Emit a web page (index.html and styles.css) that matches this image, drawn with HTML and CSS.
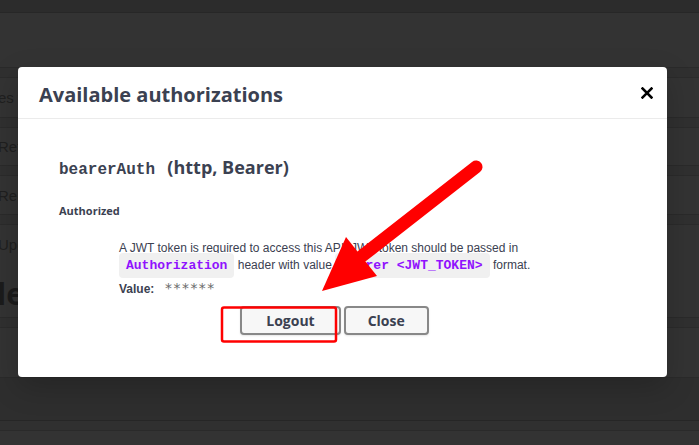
FILE: index.html
```html
<!DOCTYPE html>
<html>
<head>
<meta charset="utf-8">
<link rel="stylesheet" href="styles.css">
</head>
<body>
<div class="page">
  <div class="topbar"></div>
  <div class="hero"></div>
  <div class="gap"></div>
  <div class="row h40"><span class="rtext">es the</span></div>
  <div class="gap"></div>
  <div class="row h38"><span class="rtext">Ret</span></div>
  <div class="gap"></div>
  <div class="row h39"><span class="rtext">Ren</span></div>
  <div class="gap"></div>
  <div class="row h40"><span class="rtext">Upd</span></div>
  <div class="heading"><span class="htext">le</span></div>
  <div class="gap"></div>
  <div class="row h50"></div>
  <div class="spacer"></div>
  <div class="band"></div>
  <div class="rest"></div>
</div>

<div class="modal">
  <div class="modal-header">
    <h3 class="modal-title">Available authorizations</h3>
    <button class="close-x" aria-label="close">
      <svg width="12" height="12" viewBox="0 0 12 12"><path d="M1.5 1.5 L10.5 10.5 M10.5 1.5 L1.5 10.5" stroke="#000" stroke-width="2.5" stroke-linecap="square"/></svg>
    </button>
  </div>
  <div class="modal-body">
    <h4 class="scheme"><code class="scheme-code">bearerAuth</code>&nbsp; (http, Bearer)</h4>
    <div class="authorized">Authorized</div>
    <div class="desc">
      <p class="desc-text">A JWT token is required to access this API. JWT token should be passed in <code class="md-code">Authorization</code> header with value <code class="md-code">Bearer &lt;JWT_TOKEN&gt;</code> format.</p>
      <div class="value-line"><span class="value-label">Value:</span><span class="value-stars">******</span></div>
    </div>
    <div class="btn-wrapper">
      <button class="btn btn-logout">Logout</button>
      <button class="btn btn-close">Close</button>
    </div>
  </div>
</div>

<svg class="annot" width="699" height="445" viewBox="0 0 699 445">
  <line x1="476" y1="167" x2="362" y2="256" stroke="#ff0000" stroke-width="13" stroke-linecap="round"/>
  <polygon points="322,291 346,237 377,276" fill="#ff0000"/>
  <rect x="222" y="307.5" width="114" height="34" rx="2" fill="none" stroke="#ff0000" stroke-width="2.5"/>
</svg>
</body>
</html>
```

FILE: styles.css
```css
* { box-sizing: border-box; }
html, body { margin: 0; padding: 0; }
body {
  width: 699px;
  height: 445px;
  overflow: hidden;
  background: #333333;
  font-family: "Liberation Sans", Arial, sans-serif;
  position: relative;
}
.page { width: 699px; height: 445px; overflow: hidden; }
.topbar { height: 13px; background: #2c2c2c; border-bottom: 1px solid #272727; }
.hero { height: 54px; background: #333333; }
.gap { height: 10px; background: #303030; border-top: 1px solid #2a2a2a; }
.row {
  background: #333333;
  border-top: 1px solid #2b2b2b;
  display: flex;
  align-items: center;
  overflow: hidden;
}
.h40 { height: 40px; }
.h38 { height: 38px; }
.h39 { height: 39px; }
.h50 { height: 50px; }
.rtext {
  font-size: 15px;
  color: #1f1f1f;
  margin-left: -2px;
  white-space: nowrap;
}
.heading {
  height: 53px;
  background: #333333;
  display: flex;
  align-items: center;
}
.htext {
  font-family: "Open Sans", sans-serif;
  font-weight: 700;
  font-size: 30px;
  color: #1b1b1b;
  margin-left: -3px;
  margin-top: 6px;
}
.spacer { height: 43px; background: #2e2e2e; border-top: 1px solid #2a2a2a; }
.band { height: 10px; background: #303030; border-top: 1px solid #262626; }
.rest { height: 15px; background: #333333; border-top: 1px solid #2a2a2a; }

.modal {
  position: absolute;
  left: 18px;
  top: 67px;
  width: 649px;
  height: 310px;
  background: #ffffff;
  border-radius: 4px;
  box-shadow: 0 10px 30px rgba(0,0,0,0.2);
}
.modal-header {
  height: 52px;
  border-bottom: 1px solid #ebebeb;
  display: flex;
  align-items: center;
  justify-content: space-between;
  padding: 0 10px 0 21px;
}
.modal-title {
  margin: 4px 0 0 0;
  font-family: "Open Sans", sans-serif;
  font-weight: 700;
  font-size: 20px;
  color: #3b4151;
}
.close-x {
  border: none;
  background: none;
  padding: 0;
  width: 20px;
  height: 20px;
  display: flex;
  align-items: center;
  justify-content: center;
}
.modal-body { padding: 0 0 0 41px; }
.scheme {
  margin: 37px 0 0 0;
  font-family: "Open Sans", sans-serif;
  font-weight: 700;
  font-size: 18px;
  line-height: 22px;
  color: #3b4151;
}
.scheme-code {
  font-family: "Liberation Mono", monospace;
  font-weight: 700;
  font-size: 16px;
  margin-right: 3px;
}
.authorized {
  margin-top: 23px;
  font-family: "Open Sans", sans-serif;
  font-weight: 700;
  font-size: 11px;
  line-height: 14px;
  color: #3b4151;
}
.desc { padding-left: 60px; margin-top: 22px; }
.desc-text {
  margin: 0;
  font-size: 12px;
  line-height: 17px;
  color: #3b4151;
  width: 418px;
}
.md-code {
  font-family: "Liberation Mono", monospace;
  font-weight: 700;
  font-size: 13px;
  color: #9012fe;
  background: #f0f0f0;
  border-radius: 4px;
  padding: 5px 7px;
}
.value-line {
  margin-top: 6px;
  font-size: 12px;
  line-height: 16px;
  color: #3b4151;
  display: flex;
  align-items: baseline;
}
.value-label { font-weight: 700; }
.value-stars {
  margin-left: 10px;
  font-family: "DejaVu Sans Mono", monospace;
  font-size: 14px;
  color: #6b6b6b;
}
.btn-wrapper {
  display: flex;
  justify-content: center;
  gap: 3px;
  margin-top: 9px;
  margin-left: -41px;
  padding-right: 16px;
}
.btn {
  font-family: "Open Sans", sans-serif;
  font-weight: 700;
  font-size: 14px;
  color: #3b4151;
  background: #f7f7f7;
  border: 2px solid #888888;
  border-radius: 4px;
  line-height: 19px;
  height: 29px;
  box-shadow: 0 1px 2px rgba(0,0,0,0.1);
}
.btn-logout { padding: 3px 24px; }
.btn-close { padding: 3px 22px; }
.annot {
  position: absolute;
  left: 0;
  top: 0;
  pointer-events: none;
}
```
